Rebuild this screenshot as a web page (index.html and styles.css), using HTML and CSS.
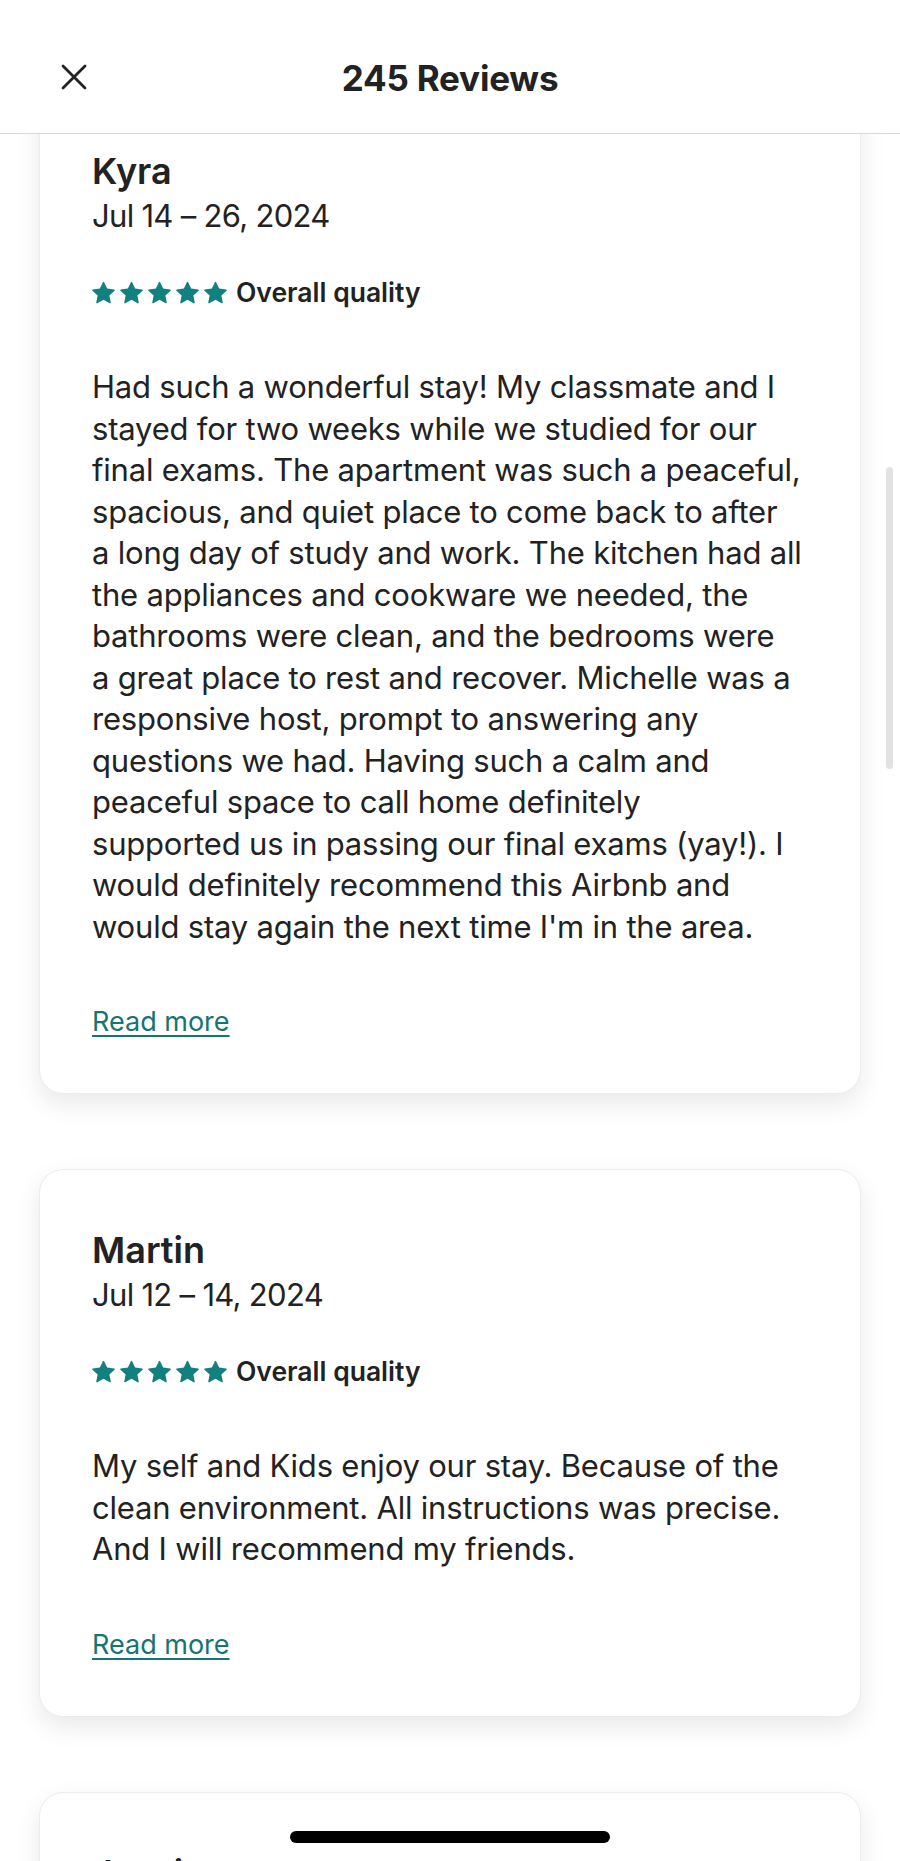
FILE: index.html
```html
<!DOCTYPE html>
<html>
<head>
    <meta charset="utf-8">
    <title>245 Reviews</title>
    <link rel="stylesheet" href="styles.css">
</head>
<body>

<div class="screen">
    <header class="top-bar">
        <button class="close-btn" aria-label="Close">
            <svg viewBox="0 0 26 26" width="26" height="26">
                <path d="M2 2 L24 24 M24 2 L2 24" stroke="#222" stroke-width="2.8" stroke-linecap="round" fill="none"/>
            </svg>
        </button>
        <h1 class="top-title">245 Reviews</h1>
        <span></span>
    </header>

    <main class="review-list">
        <article class="review-card first-card">
            <div class="review-name">Kyra</div>
            <div class="review-date">Jul 14 – 26, 2024</div>
            <div class="review-rating">
                <span class="stars"></span>
                <span class="rating-label">Overall quality</span>
            </div>
            <p class="review-text">Had such a wonderful stay! My classmate and I<br>
                stayed for two weeks while we studied for our<br>
                final exams. The apartment was such a peaceful,<br>
                spacious, and quiet place to come back to after<br>
                a long day of study and work. The kitchen had all<br>
                the appliances and cookware we needed, the<br>
                bathrooms were clean, and the bedrooms were<br>
                a great place to rest and recover. Michelle was a<br>
                responsive host, prompt to answering any<br>
                questions we had. Having such a calm and<br>
                peaceful space to call home definitely<br>
                supported us in passing our final exams (yay!). I<br>
                would definitely recommend this Airbnb and<br>
                would stay again the next time I'm in the area.</p>
            <a class="read-more" href="#">Read more</a>
        </article>

        <article class="review-card">
            <div class="review-name">Martin</div>
            <div class="review-date">Jul 12 – 14, 2024</div>
            <div class="review-rating">
                <span class="stars"></span>
                <span class="rating-label">Overall quality</span>
            </div>
            <p class="review-text">My self and Kids enjoy our stay. Because of the<br>
                clean environment. All instructions was precise.<br>
                And I will recommend my friends.</p>
            <a class="read-more" href="#">Read more</a>
        </article>

        <article class="review-card">
            <div class="review-name">Jessica</div>
        </article>
    </main>

    <div class="scroll-thumb"></div>
    <div class="home-bar"></div>
</div>

<script>
    "use strict"

    const starPath = "M15.094 1.579l-4.124 8.885-9.86 1.27a1 1 0 0 0-.542 1.736l7.293 6.565-1.965 9.852a1 1 0 0 0 1.483 1.061L16 25.951l8.625 4.997a1 1 0 0 0 1.482-1.06l-1.965-9.853 7.293-6.565a1 1 0 0 0-.541-1.735l-9.86-1.271-4.127-8.885a1 1 0 0 0-1.814 0z";

    for (let box of document.querySelectorAll(".stars")) {
        let html = "";
        for (let i = 0; i < 5; i++) {
            html += '<svg viewBox="0 0 32 32" width="23" height="23"><path d="' + starPath + '"/></svg>';
        }
        box.innerHTML = html;
    }
</script>

</body>
</html>
```

FILE: styles.css
```css
html, body {
    margin: 0;
    padding: 0;
    background: #ffffff;
}

body {
    font-family: Inter, "Liberation Sans", sans-serif;
    color: #222222;
}

.screen {
    position: relative;
    width: 900px;
    height: 1861px;
    overflow: hidden;
    background: #ffffff;
}

/* top bar */
.top-bar {
    position: relative;
    z-index: 2;
    height: 134px;
    box-sizing: border-box;
    padding: 56px 0 0 61px;
    display: grid;
    grid-template-columns: 1fr auto 1fr;
    align-items: start;
    background: #ffffff;
    border-bottom: 1.5px solid #d8d8d8;
}

.close-btn {
    justify-self: start;
    margin-top: 8px;
    padding: 0;
    border: none;
    background: none;
    width: 26px;
    height: 26px;
}

.close-btn svg {
    display: block;
}

.top-title {
    margin: 0 0 0 -61px;
    font-size: 35px;
    line-height: 44px;
    font-weight: 700;
    letter-spacing: -0.2px;
}

/* cards */
.review-list {
    padding: 0 39px;
}

.review-card {
    background: #ffffff;
    border: 1px solid #ececec;
    border-radius: 24px;
    padding: 58px 52px 53px;
    margin-bottom: 75px;
    box-shadow: 0 10px 26px rgba(0, 0, 0, 0.09);
}

.first-card {
    margin-top: -44px;
}

.review-name {
    font-size: 36px;
    line-height: 44px;
    font-weight: 600;
}

.review-date {
    margin-top: 3px;
    font-size: 31px;
    line-height: 40px;
    letter-spacing: -0.7px;
}

.review-rating {
    margin-top: 40px;
    height: 32px;
    display: flex;
    align-items: center;
}

.stars {
    display: flex;
    gap: 5px;
    fill: #11807f;
}

.stars svg {
    display: block;
}

.rating-label {
    margin-left: 9px;
    font-size: 26.5px;
    line-height: 32px;
    font-weight: 600;
}

.review-text {
    margin: 58px 0 0;
    font-size: 31px;
    line-height: 41.5px;
    letter-spacing: -0.2px;
    white-space: nowrap;
}

.read-more {
    display: inline-block;
    margin-top: 57px;
    font-size: 27px;
    line-height: 36px;
    color: #167472;
    text-decoration: underline;
    text-decoration-thickness: 2px;
    text-underline-offset: 4px;
}

/* overlays */
.scroll-thumb {
    position: absolute;
    left: 886px;
    top: 467px;
    width: 7px;
    height: 302px;
    border-radius: 4px;
    background: #e2e2e2;
}

.home-bar {
    position: absolute;
    left: 290px;
    top: 1831px;
    width: 320px;
    height: 12px;
    border-radius: 6px;
    background: #000000;
}
```
